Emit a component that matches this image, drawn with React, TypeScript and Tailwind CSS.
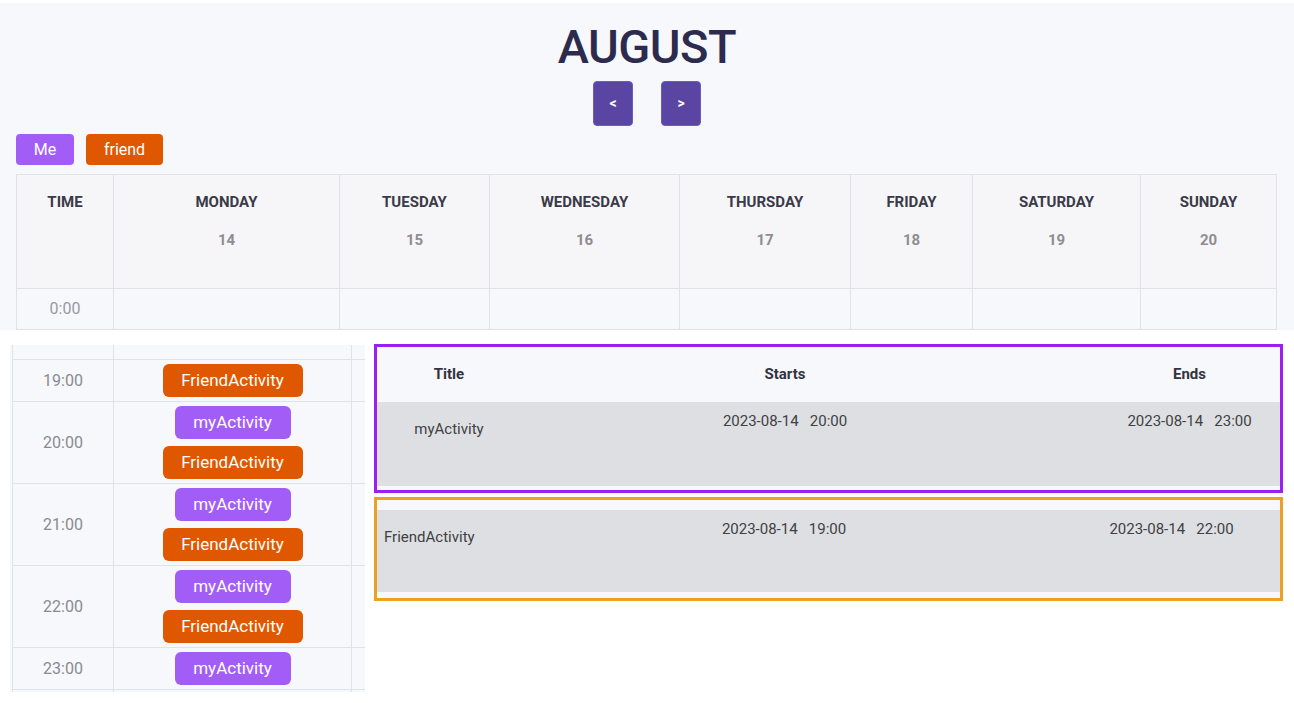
const days = [
  { name: 'MONDAY', date: 14, w: 'w-[226px]' },
  { name: 'TUESDAY', date: 15, w: 'w-[150px]' },
  { name: 'WEDNESDAY', date: 16, w: 'w-[190px]' },
  { name: 'THURSDAY', date: 17, w: 'w-[171px]' },
  { name: 'FRIDAY', date: 18, w: 'w-[122px]' },
  { name: 'SATURDAY', date: 19, w: 'w-[168px]' },
  { name: 'SUNDAY', date: 20, w: 'flex-1' },
]

const slots = [
  { time: '19:00', items: ['friend'] },
  { time: '20:00', items: ['me', 'friend'] },
  { time: '21:00', items: ['me', 'friend'] },
  { time: '22:00', items: ['me', 'friend'] },
  { time: '23:00', items: ['me'] },
]

function Pill({ kind }: { kind: string }) {
  return kind === 'me' ? (
    <div className="w-[116px] h-[33px] rounded-[6px] bg-[#a35df7] text-white text-[17px] flex items-center justify-center">
      myActivity
    </div>
  ) : (
    <div className="w-[140px] h-[33px] rounded-[6px] bg-[#df5800] text-white text-[17px] flex items-center justify-center">
      FriendActivity
    </div>
  )
}

function WeekTop() {
  return (
    <div className="mt-[3px] h-[327px] bg-[#f7f8fc] overflow-hidden">
      <h1 className="text-center text-[47px] leading-none font-medium text-[#2c2b4e] pt-[20px] tracking-[-0.5px]">
        AUGUST
      </h1>
      <div className="flex justify-center gap-[28px] mt-[11px]">
        <button className="w-[40px] h-[45px] rounded-[4px] bg-[#5a45a3] border border-[#6a5bc8] text-white text-[14px] font-bold">
          &lt;
        </button>
        <button className="w-[40px] h-[45px] rounded-[4px] bg-[#5a45a3] border border-[#6a5bc8] text-white text-[14px] font-bold">
          &gt;
        </button>
      </div>
      <div className="flex gap-[12px] pl-[16px] mt-[8px]">
        <button className="w-[58px] h-[31px] rounded-[4px] bg-[#a35df7] text-white text-[16px]">Me</button>
        <button className="w-[77px] h-[31px] rounded-[4px] bg-[#df5800] text-white text-[16px]">friend</button>
      </div>
      <div className="ml-[16px] mt-[9px] w-[1261px] border-l border-t border-[#e1e2e7]">
        <div className="flex h-[114px] bg-[#f6f6f8] border-b border-[#e1e2e7]">
          <div className="w-[97px] border-r border-[#e1e2e7] pt-[16px] text-center text-[15px] font-bold text-[#3a3a48]">
            TIME
          </div>
          {days.map((d) => (
            <div key={d.name} className={`${d.w} border-r border-[#e1e2e7] pt-[16px] text-center`}>
              <div className="text-[15px] font-bold text-[#3a3a48]">{d.name}</div>
              <div className="mt-[15px] text-[15px] font-bold text-[#8d8d92]">{d.date}</div>
            </div>
          ))}
        </div>
        <div className="flex h-[41px] border-b border-[#e1e2e7]">
          <div className="w-[97px] border-r border-[#e1e2e7] flex items-center justify-center text-[16px] text-[#9a9aa0]">
            0:00
          </div>
          {days.map((d) => (
            <div key={d.name} className={`${d.w} border-r border-[#e1e2e7]`} />
          ))}
        </div>
      </div>
    </div>
  )
}

function DayDetail() {
  return (
    <div className="ml-[10px] mt-[15px] w-[355px] h-[347px] bg-[#f7f8fc] overflow-hidden pl-[2px]">
      <div className="border-l border-[#e1e2e7] w-[360px]">
        <div className="flex h-[15px] border-b border-[#e1e2e7]">
          <div className="w-[101px] border-r border-[#e1e2e7]" />
          <div className="w-[238px] border-r border-[#e1e2e7]" />
        </div>
        {slots.map((s) => (
          <div key={s.time} className="flex border-b border-[#e1e2e7]">
            <div className="w-[101px] border-r border-[#e1e2e7] flex items-center justify-center text-[16px] text-[#8a8a90]">
              {s.time}
            </div>
            <div className="w-[238px] border-r border-[#e1e2e7] flex flex-col items-center gap-[7px] py-[4px]">
              {s.items.map((k, i) => (
                <Pill key={i} kind={k} />
              ))}
            </div>
          </div>
        ))}
        <div className="flex h-[4px]">
          <div className="w-[101px] border-r border-[#e1e2e7]" />
          <div className="w-[238px] border-r border-[#e1e2e7]" />
        </div>
      </div>
    </div>
  )
}

function Lists() {
  return (
    <div className="ml-[9px] mt-[14px] w-[909px]">
      <div className="border-[3px] border-[#9a1ff0] bg-[#f7f8fc]">
        <div className="grid grid-cols-[144px_528px_1fr] h-[55px] items-center text-[15px] font-bold text-[#33333f]">
          <div className="text-center">Title</div>
          <div className="text-center">Starts</div>
          <div className="text-center pl-[50px]">Ends</div>
        </div>
        <div className="grid grid-cols-[144px_528px_1fr] h-[84px] bg-[#dedfe3] text-[15px] text-[#3f3f44]">
          <div className="text-center pt-[16px]">myActivity</div>
          <div className="text-center pt-[8px] whitespace-pre">2023-08-14   20:00</div>
          <div className="text-center pt-[8px] pl-[50px] whitespace-pre">2023-08-14   23:00</div>
        </div>
        <div className="h-[4px]" />
      </div>
      <div className="mt-[4px] border-[3px] border-[#efa023] bg-[#f7f8fc] pt-[10px] pb-[6px]">
        <div className="grid grid-cols-[144px_526px_1fr] h-[82px] bg-[#dedfe3] text-[15px] text-[#3f3f44]">
          <div className="pl-[7px] pt-[16px]">FriendActivity</div>
          <div className="text-center pt-[8px] whitespace-pre">2023-08-14   19:00</div>
          <div className="text-center pt-[8px] pl-[16px] whitespace-pre">2023-08-14   22:00</div>
        </div>
      </div>
    </div>
  )
}

export default function App() {
  return (
    <div className="w-[1294px] h-[703px] bg-white overflow-hidden font-['Roboto',sans-serif]">
      <WeekTop />
      <div className="flex items-start">
        <DayDetail />
        <Lists />
      </div>
    </div>
  )
}
